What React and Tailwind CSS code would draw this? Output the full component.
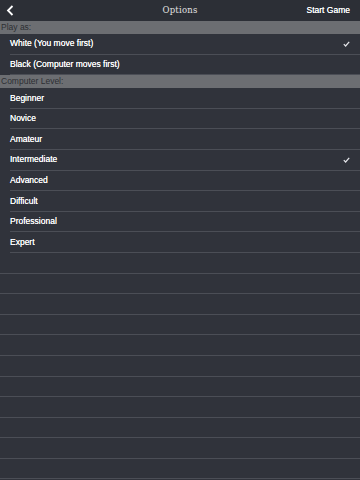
import React from "react";

const playOptions = [
  { label: "White (You move first)", checked: true },
  { label: "Black (Computer moves first)", checked: false },
];

const levels = [
  "Beginner",
  "Novice",
  "Amateur",
  "Intermediate",
  "Advanced",
  "Difficult",
  "Professional",
  "Expert",
];

const Check = () => (
  <svg width="7" height="6" viewBox="0 0 7 6" className="text-gray-200">
    <path d="M0.8 3.2 L2.6 5 L6.2 0.8" fill="none" stroke="currentColor" strokeWidth="1.2" />
  </svg>
);

const Row = ({ label, checked }) => (
  <div className="h-[20.6px] pl-[10px] flex">
    <div className="flex-1 flex items-center justify-between pr-[10px] border-b border-[#4b4e56]">
      <span className="text-[8.5px] text-white [text-shadow:0_0_0.4px_white]">{label}</span>
      {checked && <Check />}
    </div>
  </div>
);

const SectionHeader = ({ title }) => (
  <div className="h-[13px] bg-[#6c6e72] flex items-center px-[1px]">
    <span className="text-[8.5px] text-[#2c2e33] leading-none">{title}</span>
  </div>
);

const App = () => {
  const intermediate = "Intermediate";

  return (
    <div
      className="w-[360px] h-[480px] overflow-hidden bg-[#30333b] flex flex-col"
      style={{ fontFamily: "'Liberation Sans', Arial, sans-serif" }}
    >
      {/* Nav bar */}
      <div className="h-[21px] shrink-0 bg-[#2c2f36] grid grid-cols-3 items-center px-[6px]">
        <svg width="8" height="11" viewBox="0 0 8 11">
          <path d="M6.5 1 L2 5.5 L6.5 10" fill="none" stroke="white" strokeWidth="1.8" />
        </svg>
        <span
          className="text-[8.5px] text-[#e2e2e2] text-center tracking-[0.2px]"
          style={{ fontFamily: "'DejaVu Serif', serif" }}
        >
          Options
        </span>
        <span className="text-[8.5px] text-white text-right pr-[4px] [text-shadow:0_0_0.4px_white]">
          Start Game
        </span>
      </div>

      <SectionHeader title="Play as:" />
      {playOptions.map((o) => (
        <Row key={o.label} label={o.label} checked={o.checked} />
      ))}

      <SectionHeader title="Computer Level:" />
      {levels.map((l) => (
        <Row key={l} label={l} checked={l === intermediate} />
      ))}

      {/* Empty filler rows */}
      {Array.from({ length: 11 }).map((_, i) => (
        <div key={i} className="h-[20.6px] shrink-0 border-b border-[#4b4e56]" />
      ))}
    </div>
  );
};

export default App;
